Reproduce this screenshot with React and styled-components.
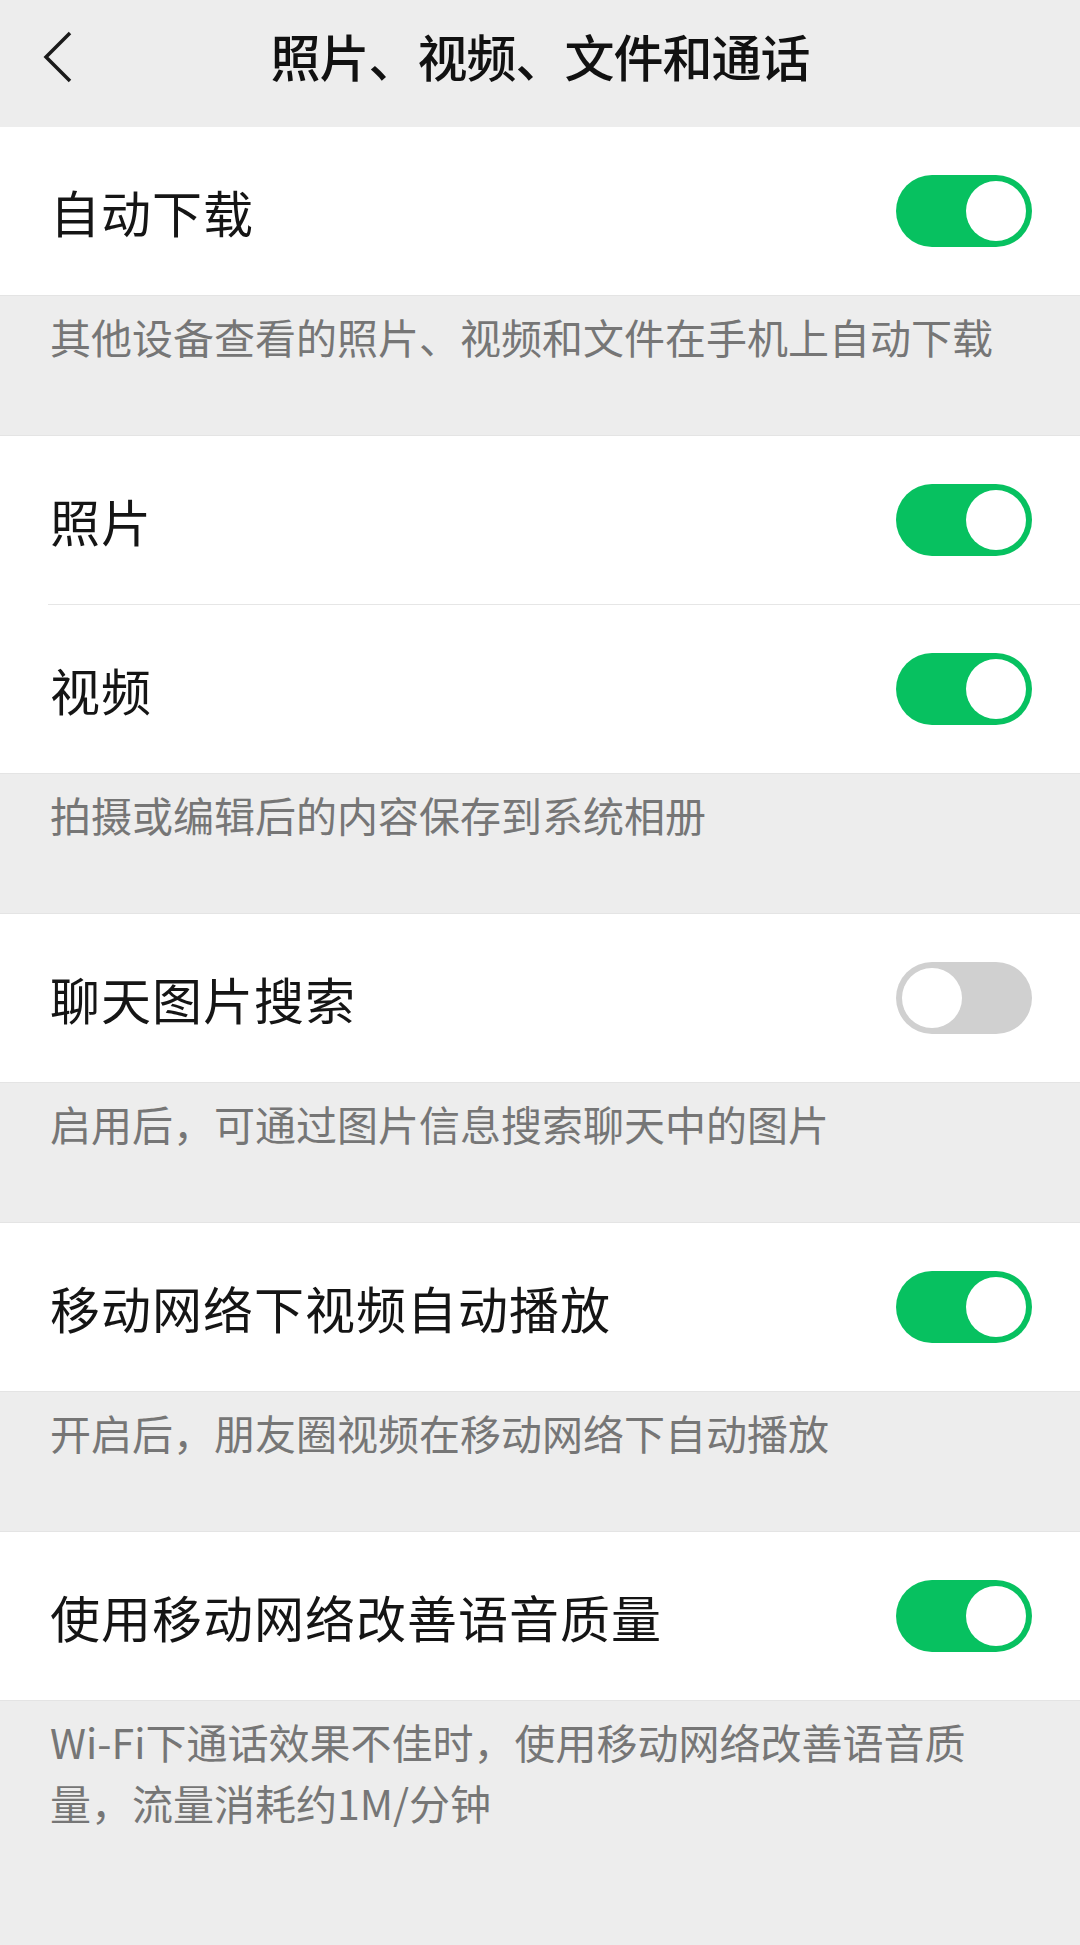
import React, { useState } from "react"
import styled, { createGlobalStyle } from "styled-components"

const GlobalStyle = createGlobalStyle`
  html, body {
    margin: 0;
    padding: 0;
    background: #ededed;
  }
  body {
    font-family: "Noto Sans CJK SC", "Noto Sans", sans-serif;
    -webkit-font-smoothing: antialiased;
  }
  * {
    box-sizing: border-box;
  }
`

const Page = styled.div`
  display: flex;
  flex-direction: column;
  min-height: 100vh;
  background: #ededed;
`

const Header = styled.header`
  display: grid;
  grid-template-columns: 1fr auto 1fr;
  align-items: center;
  height: 127px;
  background: #ededed;
`

const BackButton = styled.button`
  justify-self: start;
  display: flex;
  align-items: center;
  padding: 0 0 14px 42px;
  border: none;
  background: none;
  cursor: pointer;
`

const Title = styled.h1`
  margin: 0 0 18px;
  font-size: 50px;
  font-weight: 500;
  color: #111;
  letter-spacing: -1px;
`

const Row = styled.div`
  display: flex;
  align-items: center;
  justify-content: space-between;
  height: 168px;
  padding: 0 48px 0 50px;
  background: #fff;
`

const Label = styled.span`
  font-size: 50px;
  color: #151515;
  letter-spacing: 1px;
`

const Divider = styled.div`
  height: 1px;
  background: #fff;

  &::after {
    content: "";
    display: block;
    height: 1px;
    margin-left: 48px;
    background: #e6e6e6;
  }
`

const Note = styled.p`
  margin: 0;
  min-height: 141px;
  padding: 10px 80px 0 50px;
  font-size: 41px;
  line-height: 61px;
  color: #767676;
  border-top: 1px solid #e4e4e4;
  border-bottom: ${(p) => (p.$last ? "none" : "1px solid #e4e4e4")};
  flex-grow: ${(p) => (p.$last ? 1 : 0)};
`

const Track = styled.button`
  position: relative;
  width: 136px;
  height: 72px;
  padding: 0;
  border: none;
  border-radius: 36px;
  background: ${(p) => (p.$on ? "#07c160" : "#d0d0d0")};
  cursor: pointer;
`

const Knob = styled.span`
  position: absolute;
  top: 6px;
  left: ${(p) => (p.$on ? 70 : 6)}px;
  width: 60px;
  height: 60px;
  border-radius: 50%;
  background: #fff;
`

const Switch = ({ initial }) => {
  const [on, setOn] = useState(initial)
  return (
    <Track $on={on} onClick={() => setOn(!on)} aria-pressed={on}>
      <Knob $on={on} />
    </Track>
  )
}

const Setting = ({ label, on }) => (
  <Row>
    <Label>{label}</Label>
    <Switch initial={on} />
  </Row>
)

const App = () => (
  <Page>
    <GlobalStyle />
    <Header>
      <BackButton aria-label="返回">
        <svg width="32" height="52" viewBox="0 0 32 52">
          <polyline
            points="28,2 4,26 28,50"
            fill="none"
            stroke="#1a1a1a"
            strokeWidth="3.5"
            strokeLinejoin="miter"
          />
        </svg>
      </BackButton>
      <Title>照片、视频、文件和通话</Title>
    </Header>

    <Setting label="自动下载" on />
    <Note>其他设备查看的照片、视频和文件在手机上自动下载</Note>

    <Setting label="照片" on />
    <Divider />
    <Setting label="视频" on />
    <Note>拍摄或编辑后的内容保存到系统相册</Note>

    <Setting label="聊天图片搜索" on={false} />
    <Note>启用后，可通过图片信息搜索聊天中的图片</Note>

    <Setting label="移动网络下视频自动播放" on />
    <Note>开启后，朋友圈视频在移动网络下自动播放</Note>

    <Setting label="使用移动网络改善语音质量" on />
    <Note $last>Wi-Fi下通话效果不佳时，使用移动网络改善语音质量，流量消耗约1M/分钟</Note>
  </Page>
)

export default App
